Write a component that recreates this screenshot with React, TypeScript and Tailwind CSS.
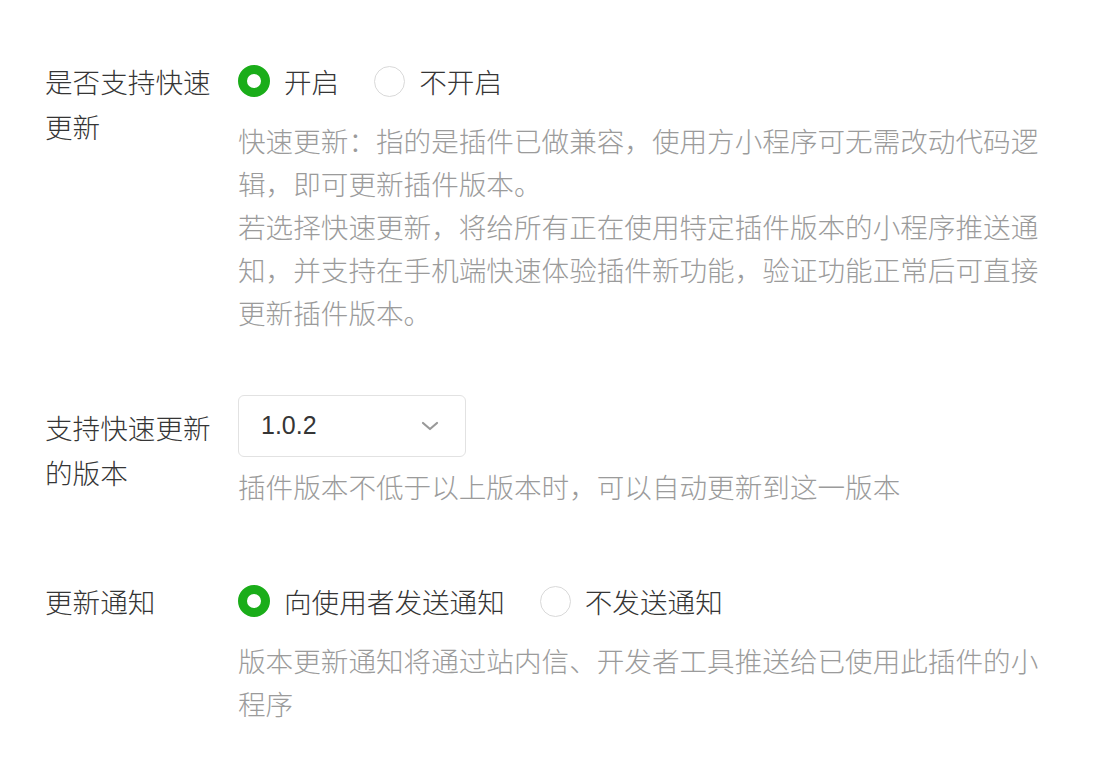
import { useState } from "react";

const font = { fontFamily: '"Noto Sans CJK SC", "Noto Sans", sans-serif' };

function Radio({ checked, label, onClick }: { checked: boolean; label: string; onClick: () => void }) {
  return (
    <label className="flex items-center cursor-pointer mr-[35px]" onClick={onClick}>
      {checked ? (
        <span className="w-[32px] h-[32px] rounded-full border-[9px] border-[#1aad19] bg-white shrink-0" />
      ) : (
        <span className="w-[31px] h-[31px] rounded-full border-[1.5px] border-[#d9d9d9] bg-white shrink-0" />
      )}
      <span className="ml-[14px] text-[#353535]">{label}</span>
    </label>
  );
}

export default function App() {
  const [quick, setQuick] = useState(true);
  const [notify, setNotify] = useState(true);

  return (
    <div className="min-h-[760px] bg-white pl-[45px] pt-[59px] text-[27.6px] font-light" style={font}>
      {/* 快速更新 */}
      <div className="flex">
        <div className="w-[170px] mr-[23px] leading-[45px] text-[#353535]">是否支持快速更新</div>
        <div className="w-[812px]">
          <div className="flex h-[45px] items-center">
            <Radio checked={quick} label="开启" onClick={() => setQuick(true)} />
            <Radio checked={!quick} label="不开启" onClick={() => setQuick(false)} />
          </div>
          <div className="mt-[15px] leading-[43px] text-[#9b9b9b]">
            <p>快速更新：指的是插件已做兼容，使用方小程序可无需改动代码逻辑，即可更新插件版本。</p>
            <p>若选择快速更新，将给所有正在使用特定插件版本的小程序推送通知，并支持在手机端快速体验插件新功能，验证功能正常后可直接更新插件版本。</p>
          </div>
        </div>
      </div>

      {/* 版本 */}
      <div className="flex mt-[61px]">
        <div className="w-[170px] mr-[23px] pt-[10px] leading-[45px] text-[#353535]">支持快速更新的版本</div>
        <div className="w-[812px]">
          <div className="flex items-center justify-between w-[228px] h-[62px] pl-[22px] pr-[26px] border border-[#e2e2e2] rounded-[6px] bg-white">
            <span className="text-[25px] font-normal text-[#353535]" style={{ fontFamily: '"Liberation Sans", Arial, sans-serif' }}>1.0.2</span>
            <svg width="18" height="12" viewBox="0 0 18 12" fill="none">
              <path d="M2 3l7 6 7-6" stroke="#999" strokeWidth="2.2" strokeLinecap="round" strokeLinejoin="round" />
            </svg>
          </div>
          <div className="mt-[8px] leading-[43px] text-[#9b9b9b]">插件版本不低于以上版本时，可以自动更新到这一版本</div>
        </div>
      </div>

      {/* 通知 */}
      <div className="flex mt-[71px]">
        <div className="w-[170px] mr-[23px] leading-[45px] text-[#353535]">更新通知</div>
        <div className="w-[812px]">
          <div className="flex h-[45px] items-center">
            <Radio checked={notify} label="向使用者发送通知" onClick={() => setNotify(true)} />
            <Radio checked={!notify} label="不发送通知" onClick={() => setNotify(false)} />
          </div>
          <div className="mt-[15px] leading-[43px] text-[#9b9b9b]">
            版本更新通知将通过站内信、开发者工具推送给已使用此插件的小程序
          </div>
        </div>
      </div>
    </div>
  );
}
